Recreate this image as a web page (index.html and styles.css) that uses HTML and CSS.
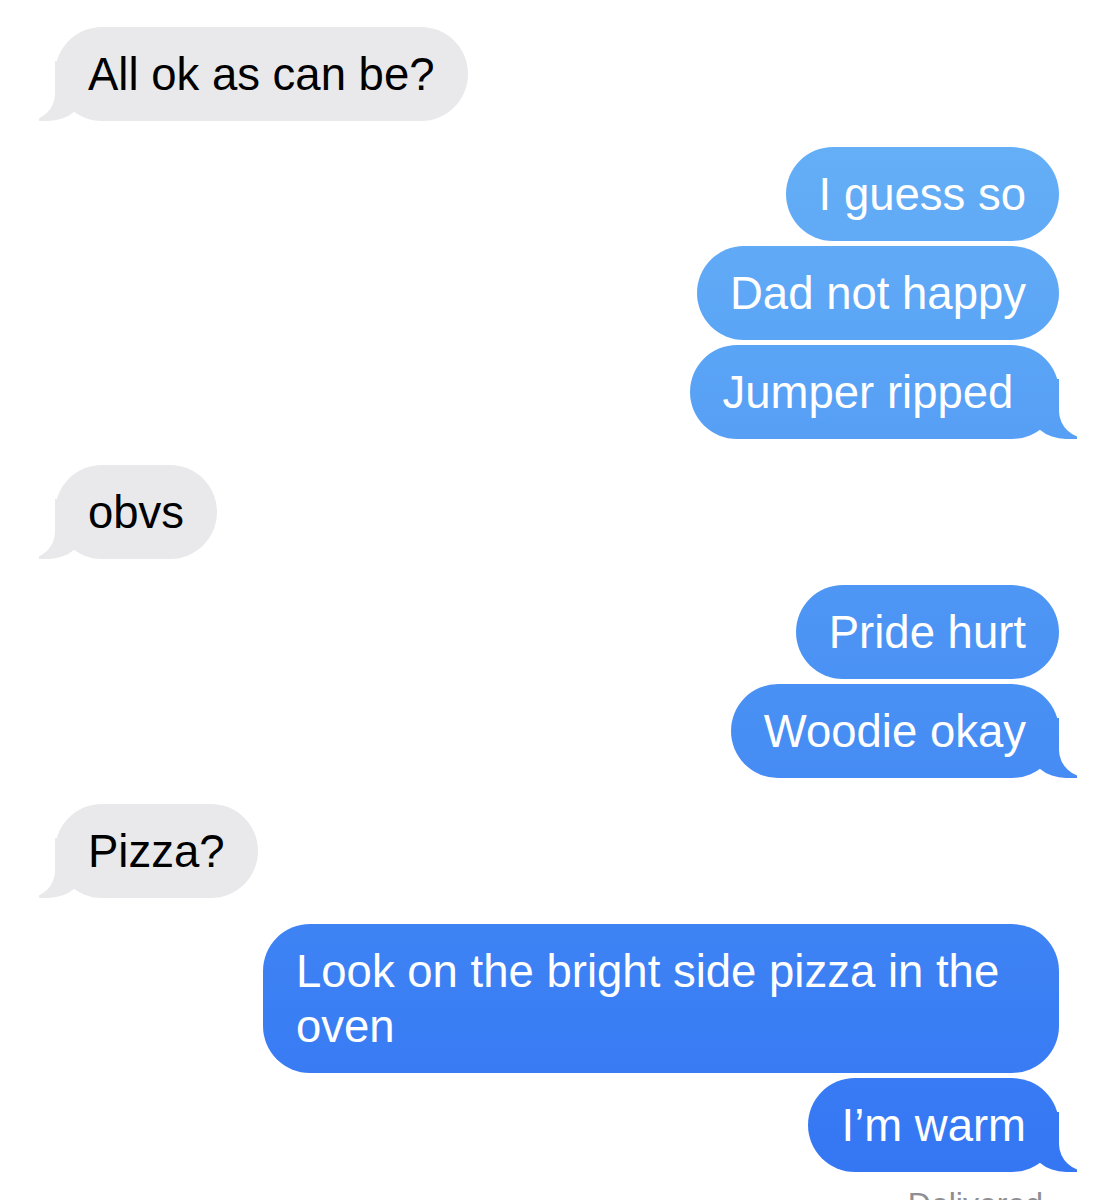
FILE: index.html
```
<!DOCTYPE html>
<html>
<head>
<meta charset="utf-8">
<link rel="stylesheet" href="styles.css">
</head>
<body>
<div class="chat">
  <div class="group them">
    <div class="bubble tail">All ok as can be?</div>
  </div>
  <div class="group me">
    <div class="bubble">I guess so</div>
    <div class="bubble">Dad not happy</div>
    <div class="bubble tail">Jumper ripped&nbsp;</div>
  </div>
  <div class="group them">
    <div class="bubble tail">obvs</div>
  </div>
  <div class="group me">
    <div class="bubble">Pride hurt</div>
    <div class="bubble tail">Woodie okay</div>
  </div>
  <div class="group them">
    <div class="bubble tail">Pizza?</div>
  </div>
  <div class="group me">
    <div class="bubble">Look on the bright side pizza in the oven</div>
    <div class="bubble tail">I’m warm</div>
  </div>
  <div class="status">Delivered</div>
</div>
</body>
</html>
```
FILE: styles.css
```
html, body {
  margin: 0;
  padding: 0;
  background: #ffffff;
}
body {
  font-family: "Liberation Sans", Arial, sans-serif;
  overflow: hidden;
  height: 1200px;
}
.chat {
  display: flex;
  flex-direction: column;
  gap: 26px;
  padding: 27px 55px 0 55px;
}
.group {
  display: flex;
  flex-direction: column;
  gap: 5px;
}
.group.them { align-items: flex-start; }
.group.me { align-items: flex-end; }
.bubble {
  position: relative;
  font-size: 45.5px;
  line-height: 55px;
  padding: 19.5px 33px;
  border-radius: 47px;
  max-width: 730px;
}
.them .bubble {
  background: #e9e9eb;
  color: #000000;
}
.me .bubble {
  background: linear-gradient(180deg, #6cb6f8 0px, #5da7f6 300px, #4990f4 700px, #3b7ff4 1000px, #3475f3 1200px) fixed;
  color: #ffffff;
}
.bubble.tail::before,
.bubble.tail::after {
  content: "";
  position: absolute;
  bottom: 0;
  height: 60px;
}
.me .bubble.tail::before {
  right: -18px;
  width: 48px;
  background: linear-gradient(180deg, #6cb6f8 0px, #5da7f6 300px, #4990f4 700px, #3b7ff4 1000px, #3475f3 1200px) fixed;
  border-bottom-left-radius: 37px 32px;
}
.me .bubble.tail::after {
  right: -70px;
  width: 70px;
  background: #ffffff;
  border-bottom-left-radius: 30px 28px;
}
.them .bubble.tail::before {
  left: -16px;
  width: 46px;
  background: #e9e9eb;
  border-bottom-right-radius: 37px 32px;
}
.them .bubble.tail::after {
  left: -70px;
  width: 70px;
  background: #ffffff;
  border-bottom-right-radius: 28px 27px;
}
.status {
  align-self: flex-end;
  margin-top: -14px;
  margin-right: 16px;
  font-size: 32px;
  line-height: 40px;
  color: #8e8e93;
}
```
